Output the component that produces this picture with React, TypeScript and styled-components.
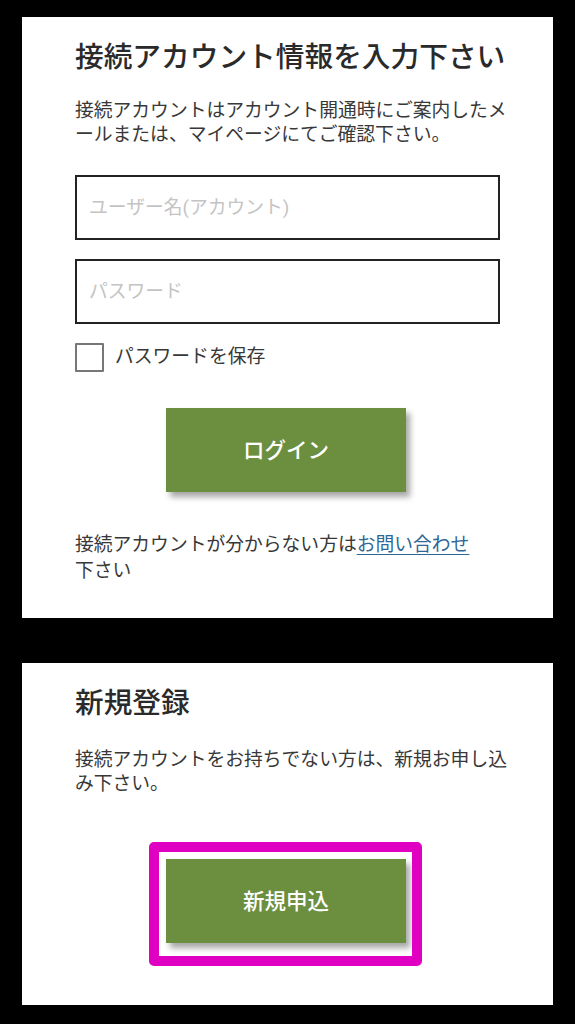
import styled, { createGlobalStyle } from 'styled-components';

const GlobalStyle = createGlobalStyle`
  html, body {
    margin: 0;
    padding: 0;
    background: #000;
  }
  body {
    font-family: Roboto, "Noto Sans CJK JP", sans-serif;
    -webkit-font-smoothing: antialiased;
  }
`;

const Page = styled.div`
  min-height: 1024px;
  box-sizing: border-box;
  padding: 17px 22px;
  background: #000;
  display: flex;
  flex-direction: column;
  gap: 45px;
`;

const Card = styled.section<{ $bottom: number }>`
  background: #fff;
  padding: 21px 53px ${({ $bottom }) => `${$bottom}px`};
  display: flex;
  flex-direction: column;
`;

const Title = styled.h2`
  margin: 0;
  font-size: 28.7px;
  line-height: 39px;
  font-weight: 500;
  color: #2a2a2a;
  white-space: nowrap;
`;

const Paragraph = styled.p<{ $lineHeight: number; $top: number }>`
  margin: ${({ $top }) => `${$top}px`} 0 0;
  font-size: 18.8px;
  line-height: ${({ $lineHeight }) => `${$lineHeight}px`};
  color: #383838;
  white-space: nowrap;
`;

const Line = styled.span`
  display: block;
`;

const Link = styled.a`
  color: #2f6796;
  text-decoration: underline;
  text-underline-offset: 3px;
`;

const Form = styled.div`
  margin-top: 28px;
  display: flex;
  flex-direction: column;
  gap: 19px;
`;

const TextInput = styled.input`
  box-sizing: border-box;
  width: 100%;
  height: 65px;
  margin: 0;
  padding: 0 12px;
  border: 2px solid #222;
  border-radius: 0;
  background: #fff;
  font-family: Roboto, "Noto Sans CJK JP", sans-serif;
  font-size: 18.8px;
  color: #333;
  outline: none;

  &::placeholder {
    color: #c4c4c4;
  }
`;

const CheckRow = styled.label`
  display: flex;
  align-items: center;
  gap: 11px;
  font-size: 18.8px;
  line-height: 29px;
  color: #383838;
`;

const CheckBox = styled.input`
  appearance: none;
  margin: 0;
  width: 29px;
  height: 29px;
  box-sizing: border-box;
  border: 2px solid #777;
  border-radius: 1px;
  background: #fff;
`;

const ButtonSlot = styled.div<{ $top: number }>`
  position: relative;
  align-self: center;
  margin: ${({ $top }) => `${$top}px`} 3px 0 0;
`;

const GreenButton = styled.button`
  display: block;
  width: 240px;
  height: 84px;
  padding: 0 0 3px;
  border: none;
  background: #6c8f3f;
  color: #fff;
  font-family: Roboto, "Noto Sans CJK JP", sans-serif;
  font-size: 21.5px;
  font-weight: 500;
  box-shadow: 4px 5px 6px rgba(0, 0, 0, 0.35);
  cursor: pointer;
`;

// annotation frame drawn over the button
const Highlight = styled.div`
  position: absolute;
  top: -17px;
  left: -17px;
  right: -16px;
  bottom: -23px;
  border: 10px solid #e000c2;
  border-radius: 5px;
  pointer-events: none;
`;

const App = () => {
  return (
    <>
      <GlobalStyle />
      <Page>
        <Card $bottom={34}>
          <Title>接続アカウント情報を入力下さい</Title>
          <Paragraph $lineHeight={24} $top={22}>
            <Line>接続アカウントはアカウント開通時にご案内したメ</Line>
            <Line>ールまたは、マイページにてご確認下さい。</Line>
          </Paragraph>
          <Form>
            <TextInput type="text" placeholder="ユーザー名(アカウント)" />
            <TextInput type="password" placeholder="パスワード" />
            <CheckRow>
              <CheckBox type="checkbox" />
              パスワードを保存
            </CheckRow>
          </Form>
          <ButtonSlot $top={36}>
            <GreenButton>ログイン</GreenButton>
          </ButtonSlot>
          <Paragraph $lineHeight={26} $top={40}>
            <Line>
              接続アカウントが分からない方は<Link href="#">お問い合わせ</Link>
            </Line>
            <Line>下さい</Line>
          </Paragraph>
        </Card>
        <Card $bottom={62}>
          <Title>新規登録</Title>
          <Paragraph $lineHeight={24} $top={25}>
            <Line>接続アカウントをお持ちでない方は、新規お申し込</Line>
            <Line>み下さい。</Line>
          </Paragraph>
          <ButtonSlot $top={63}>
            <GreenButton>新規申込</GreenButton>
            <Highlight />
          </ButtonSlot>
        </Card>
      </Page>
    </>
  );
};

export default App;
